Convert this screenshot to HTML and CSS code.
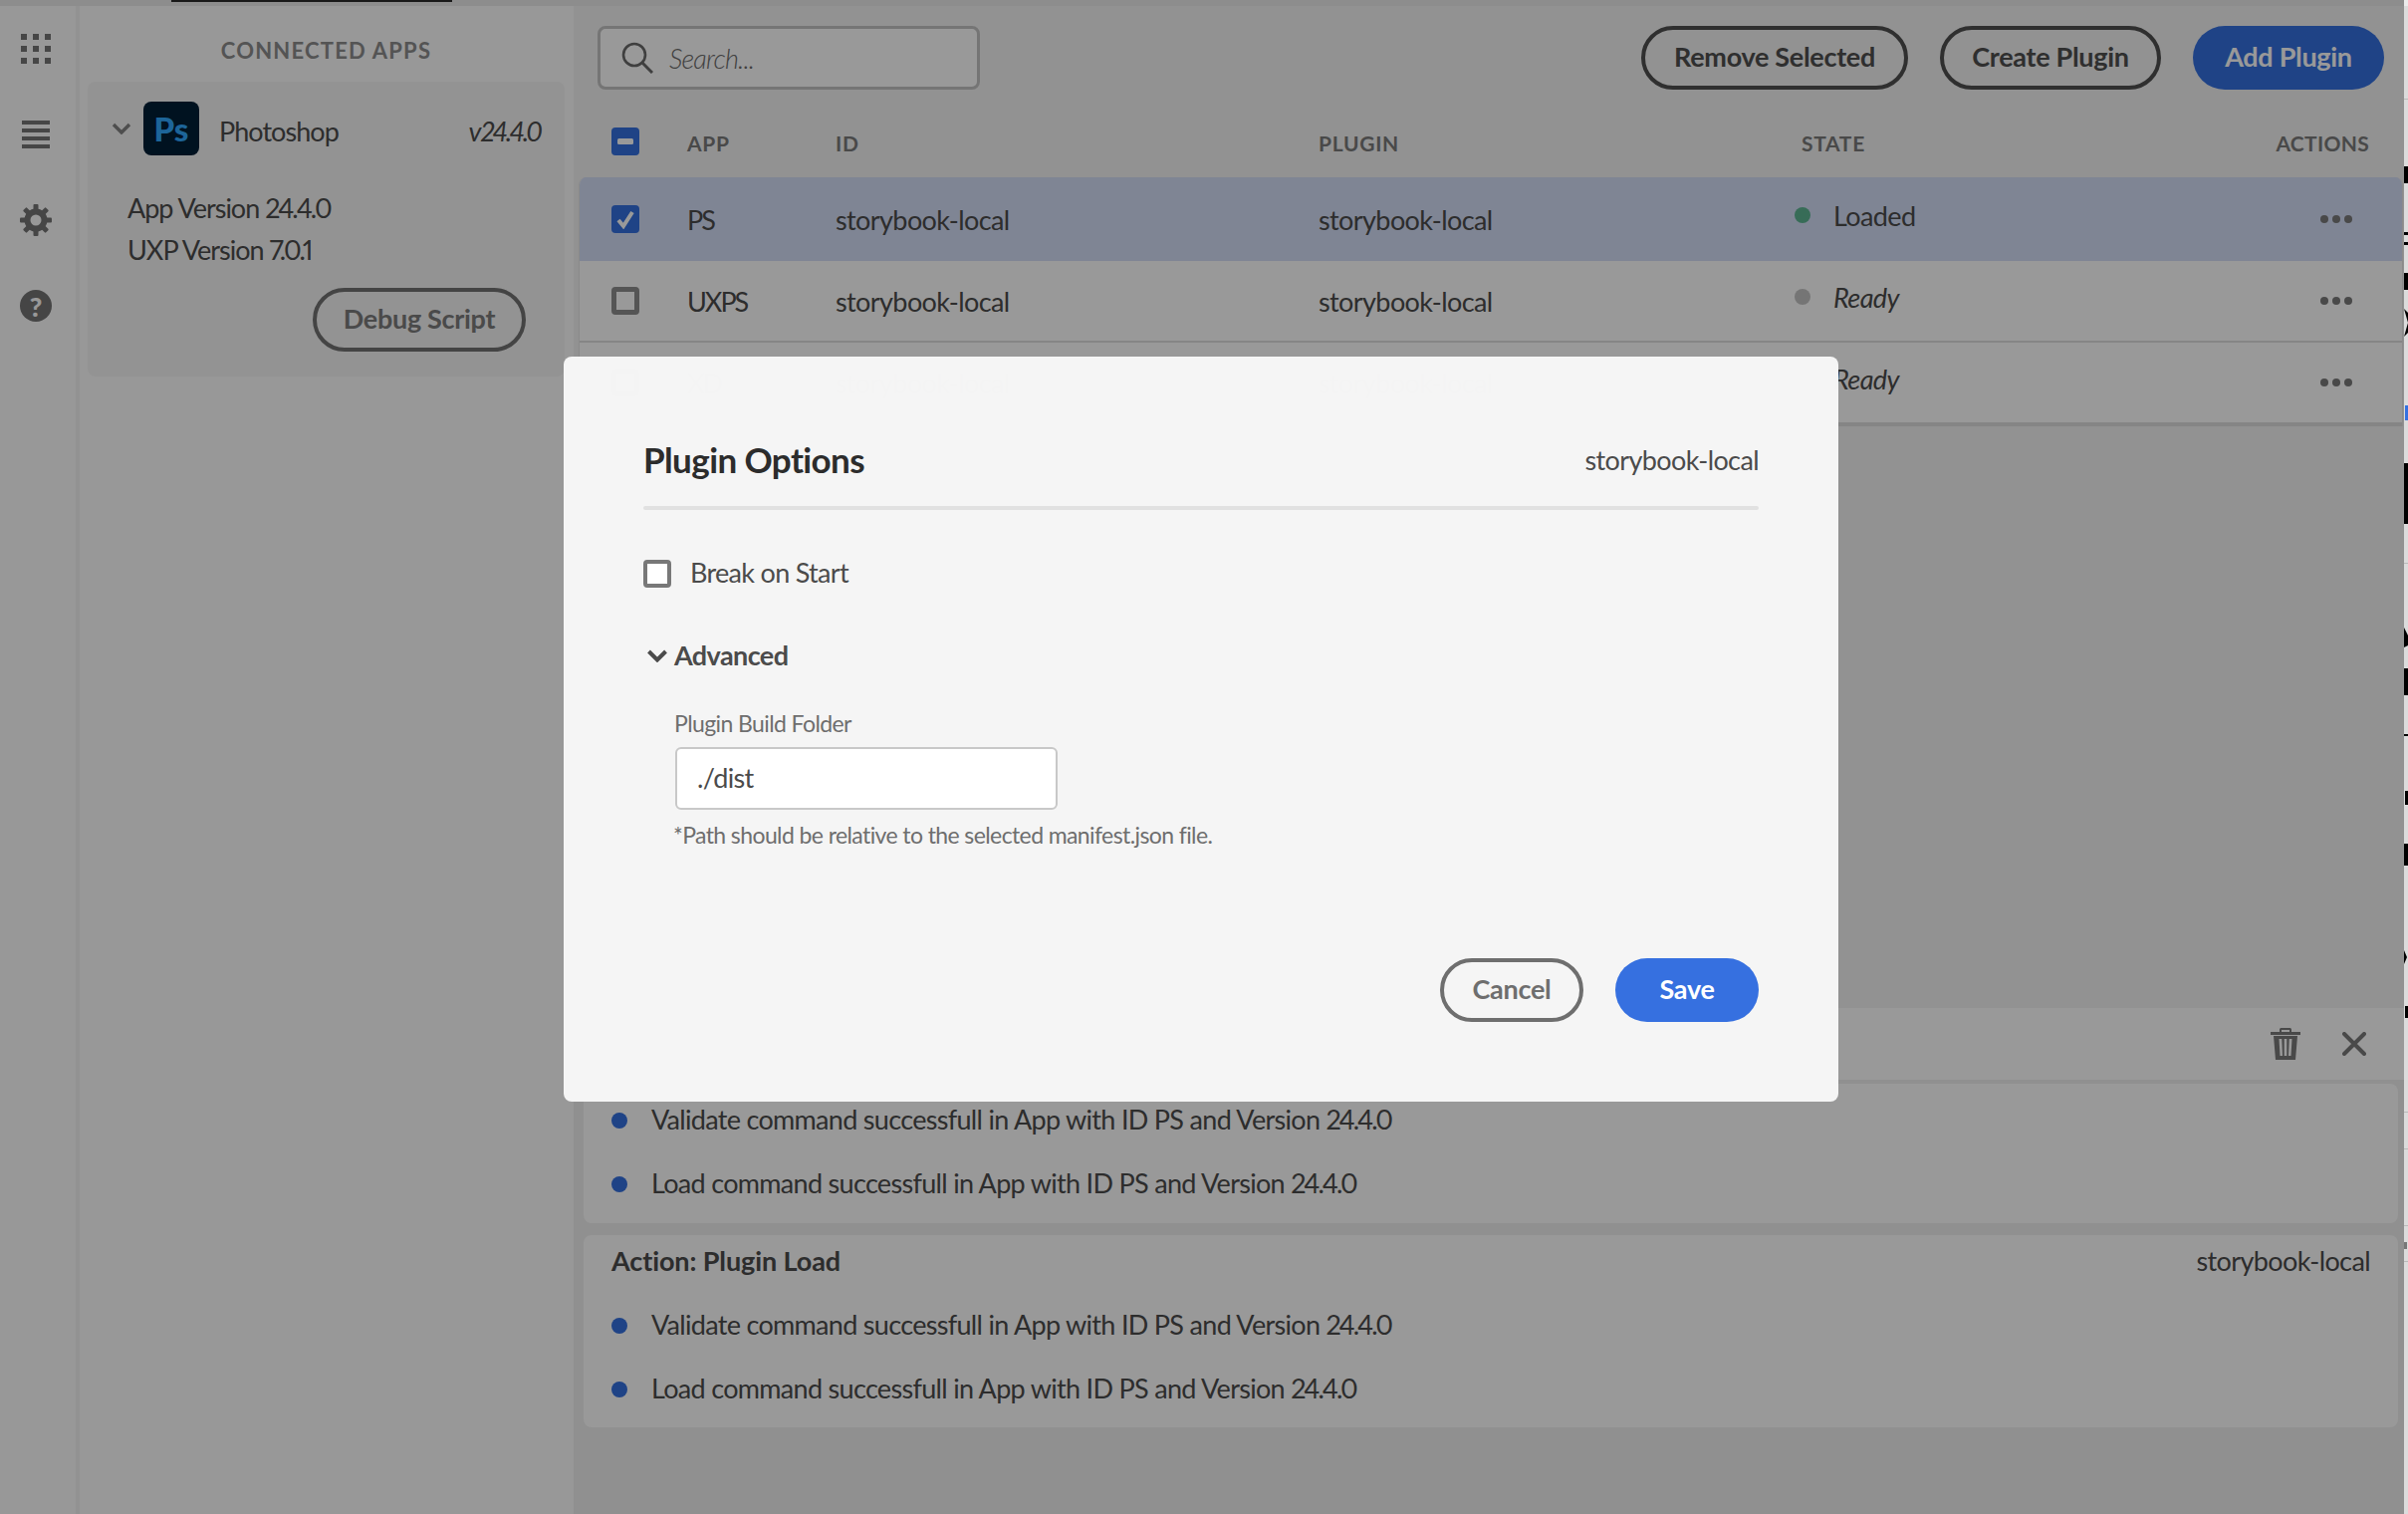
FILE: index.html
```html
<!DOCTYPE html>
<html lang="en">
<head>
<meta charset="utf-8">
<title>Plugin Options</title>
<link rel="stylesheet" href="styles.css">
</head>
<body>
<div class="app">
  <div class="topstrip"><div class="notch"></div></div>
  <div class="workspace">
    <nav class="rail">
      <div class="rail-slot">
        <svg class="ico" width="32" height="32" viewBox="0 0 32 32"><g fill="currentColor"><rect x="1" y="1" width="6" height="6"/><rect x="13" y="1" width="6" height="6"/><rect x="25" y="1" width="6" height="6"/><rect x="1" y="13" width="6" height="6"/><rect x="13" y="13" width="6" height="6"/><rect x="25" y="13" width="6" height="6"/><rect x="1" y="25" width="6" height="6"/><rect x="13" y="25" width="6" height="6"/><rect x="25" y="25" width="6" height="6"/></g></svg>
      </div>
      <div class="rail-slot">
        <svg class="ico" width="32" height="32" viewBox="0 0 32 32"><g fill="currentColor"><rect x="2" y="2" width="28" height="4"/><rect x="2" y="10" width="28" height="4"/><rect x="2" y="18" width="28" height="4"/><rect x="2" y="26" width="28" height="4"/></g></svg>
      </div>
      <div class="rail-slot">
        <svg class="ico" width="32" height="32" viewBox="0 0 32 32"><g fill="currentColor"><circle cx="16" cy="16" r="8.500" fill="none" stroke="currentColor" stroke-width="6"/><rect x="13.500" y="0" width="5" height="6" rx="1"/><rect x="13.500" y="26" width="5" height="6" rx="1"/><rect x="0" y="13.500" width="6" height="5" rx="1"/><rect x="26" y="13.500" width="6" height="5" rx="1"/><rect x="13.500" y="0" width="5" height="6" rx="1" transform="rotate(45 16 16)"/><rect x="13.500" y="26" width="5" height="6" rx="1" transform="rotate(45 16 16)"/><rect x="0" y="13.500" width="6" height="5" rx="1" transform="rotate(45 16 16)"/><rect x="26" y="13.500" width="6" height="5" rx="1" transform="rotate(45 16 16)"/></g></svg>
      </div>
      <div class="rail-slot"><span class="help">?</span></div>
    </nav>

    <aside class="side">
      <h2 class="side-title">CONNECTED APPS</h2>
      <section class="app-card">
        <div class="app-head">
          <svg class="chev" width="20" height="12" viewBox="0 0 20 12"><path d="M2 2l8 8 8-8" fill="none" stroke="currentColor" stroke-width="3.400"/></svg>
          <div class="ps-logo">Ps</div>
          <span class="app-name">Photoshop</span>
          <span class="app-ver">v<span class="num">24.4.0</span></span>
        </div>
        <p class="app-line">App Version <span class="num">24.4.0</span></p>
        <p class="app-line">UXP Version <span class="num">7.0.1</span></p>
        <div class="app-foot"><button class="btn btn-side">Debug Script</button></div>
      </section>
    </aside>

    <main class="main">
      <div class="toolbar">
        <div class="search">
          <svg width="32" height="32" viewBox="0 0 32 32"><circle cx="13" cy="13" r="11" fill="none" stroke="currentColor" stroke-width="2.600"/><path d="M21 21l10 10" stroke="currentColor" stroke-width="3" fill="none"/></svg>
          <span class="search-text">Search...</span>
        </div>
        <div class="actions">
          <button class="btn btn-outline">Remove Selected</button>
          <button class="btn btn-outline">Create Plugin</button>
          <button class="btn btn-primary">Add Plugin</button>
        </div>
      </div>

      <div class="thead grid">
        <span class="cb cb-on"><svg width="16" height="6" viewBox="0 0 16 6"><rect width="16" height="6" rx="1.500" fill="currentColor"/></svg></span>
        <span class="th">APP</span>
        <span class="th">ID</span>
        <span class="th">PLUGIN</span>
        <span class="th th-state">STATE</span>
        <span class="th th-actions">ACTIONS</span>
      </div>
      <div class="table">
        <div class="row row-sel grid">
          <span class="cb cb-on"><svg width="18" height="20" viewBox="0 0 18 20"><path d="M2 11l5 6L16 3" fill="none" stroke="currentColor" stroke-width="4"/></svg></span>
          <span class="cell-app">PS</span><span class="cell">storybook-local</span><span class="cell">storybook-local</span>
          <span class="state"><i class="dot dot-green"></i>Loaded</span>
          <span class="more"><i></i><i></i><i></i></span>
        </div>
        <div class="row grid">
          <span class="cb"></span>
          <span class="cell-app">UXPS</span><span class="cell">storybook-local</span><span class="cell">storybook-local</span>
          <span class="state state-idle"><i class="dot dot-gray"></i>Ready</span>
          <span class="more"><i></i><i></i><i></i></span>
        </div>
        <div class="row row-last grid">
          <span class="cb"></span>
          <span class="cell-app">XD</span><span class="cell">storybook-local</span><span class="cell">storybook-local</span>
          <span class="state state-idle"><i class="dot dot-gray"></i>Ready</span>
          <span class="more"><i></i><i></i><i></i></span>
        </div>
      </div>

      <div class="grow"></div>

      <div class="logs-head">
        <svg width="30" height="32" viewBox="0 0 30 32"><g fill="currentColor"><rect x="0" y="4" width="30" height="3"/><path d="M9 5V1.500A1.500 1.500 0 0 1 10.500 0h9A1.500 1.500 0 0 1 21 1.500V5h-2V2h-8v3z"/><path d="M3 8h24l-2 24H5zM8.500 11l1 17h2.500l-.7-17zM13.700 11v17h2.600V11zM18.700 11l-.7 17h2.500l1-17z" fill-rule="evenodd"/></g></svg>
        <svg width="24" height="24" viewBox="0 0 24 24"><path d="M2 2l20 20M22 2L2 22" stroke="currentColor" stroke-width="4" stroke-linecap="round" fill="none"/></svg>
      </div>
      <div class="logs">
        <section class="log-card">
          <div class="log-row"><i class="bullet"></i><span class="log-text">Validate command successfull in App with ID PS and Version <span class="num">24.4.0</span></span></div>
          <div class="log-row"><i class="bullet"></i><span class="log-text">Load command successfull in App with ID PS and Version <span class="num">24.4.0</span></span></div>
        </section>
        <section class="log-card">
          <header class="log-title"><strong>Action: Plugin Load</strong><span>storybook-local</span></header>
          <div class="log-row"><i class="bullet"></i><span class="log-text">Validate command successfull in App with ID PS and Version <span class="num">24.4.0</span></span></div>
          <div class="log-row"><i class="bullet"></i><span class="log-text">Load command successfull in App with ID PS and Version <span class="num">24.4.0</span></span></div>
        </section>
      </div>
    </main>

    <div class="edge">
      <svg width="4" height="1514" viewBox="0 0 4 1514">
        <g fill="#000">
          <rect y="161" width="4" height="17"/><rect y="227" width="4" height="3"/><rect y="237" width="4" height="3"/><rect y="268" width="4" height="17"/><path d="M0 304l4 14-4 14 4 -4V308z"/><rect y="459" width="4" height="61"/><path d="M0 624l4 8v10l-4 2zM0 665h4v27H0zM0 731h4v2H0zM1 788h3v14H1zM0 841h4v22H0zM0 948l3 7-3 7zM1 1004h3v12H1z"/>
        </g>
        <rect x="1" y="401" width="3" height="15" fill="#3470e0"/>
        <g fill="#bbb"><rect y="93" width="4" height="1"/><rect y="559" width="4" height="1"/><rect y="1110" width="4" height="1"/><rect y="1147" width="4" height="1"/><rect y="1224" width="4" height="1"/><rect y="1260" width="4" height="1"/></g>
        <rect y="1241" width="3" height="7" fill="#777"/>
      </svg>
    </div>
  </div>

  <div class="backdrop">
    <div class="dialog">
      <header class="dlg-head">
        <h1 class="dlg-title">Plugin Options</h1>
        <span class="dlg-id">storybook-local</span>
      </header>
      <div class="dlg-rule"></div>
      <label class="break-row"><span class="cb cb-light"></span><span class="break-text">Break on Start</span></label>
      <div class="adv-row">
        <svg width="20" height="13" viewBox="0 0 20 13"><path d="M1.500 2L10 10.500 18.500 2" fill="none" stroke="currentColor" stroke-width="4"/></svg>
        <span class="adv-text">Advanced</span>
      </div>
      <div class="adv-body">
        <div class="field-label">Plugin Build Folder</div>
        <div class="field">./dist</div>
        <div class="field-hint">*Path should be relative to the selected manifest.json file.</div>
      </div>
      <footer class="dlg-foot">
        <button class="btn btn-cancel">Cancel</button>
        <button class="btn btn-save">Save</button>
      </footer>
    </div>
  </div>
</div>
</body>
</html>
```

FILE: styles.css
```css
* { box-sizing: border-box; }
html, body { margin: 0; padding: 0; }
body {
  width: 2418px;
  height: 1520px;
  overflow: hidden;
  font-family: "Lato", "Liberation Sans", sans-serif;
  font-size: 27px;
  letter-spacing: -0.6px;
  color: #4b4b4b;
  background: #fff;
}
.num { font-variant-numeric: proportional-nums; letter-spacing: -2px; }
.app { position: relative; width: 2418px; height: 1520px; display: flex; flex-direction: column; }
.topstrip { height: 6px; background: #ececec; flex: none; padding-left: 172px; }
.notch { width: 282px; height: 2px; background: #2a2a2a; }
.workspace { flex: 1; display: flex; min-height: 0; }

.rail {
  width: 80px; flex: none; background: #fdfdfd;
  border-right: 4px solid #f3f3f3;
  display: flex; flex-direction: column; padding-right: 4px;
  color: #767676;
}
.rail-slot { height: 86px; display: flex; align-items: center; justify-content: center; }
.help {
  width: 32px; height: 32px; border-radius: 50%; background: #747474; color: #fdfdfd;
  display: flex; align-items: center; justify-content: center;
  font-weight: 900; font-size: 27px; letter-spacing: 0;
}

.side { width: 496px; flex: none; background: #fdfdfd; padding: 0 9px 0 8px; }
.side-title {
  margin: 0; height: 76px; display: flex; align-items: center; justify-content: center;
  font-size: 22px; font-weight: 700; letter-spacing: 1.2px; color: #8c8c8c; padding-top: 12px;
}
.app-card { height: 296px; background: #f5f5f5; border-radius: 8px; }
.app-head { height: 74px; padding: 20px 24px 0 24px; display: flex; align-items: center; }
.chev { color: #828282; margin-right: 12px; flex: none; }
.ps-logo {
  width: 56px; height: 54px; border-radius: 8px; background: #001e36; color: #31a8ff;
  font-weight: 900; font-size: 33px; letter-spacing: 0; flex: none;
  display: flex; align-items: center; justify-content: center;
}
.app-name { margin: 4px 0 0 20px; letter-spacing: -0.95px; }
.app-ver { margin: 4px 0 0 auto; font-style: italic; }
.app-line { margin: 0; padding-left: 40px; height: 42px; line-height: 42px; letter-spacing: -1px; }
.app-line:first-of-type { margin-top: 32px; }
.app-foot { display: flex; justify-content: flex-end; padding: 17px 39px 0 0; }

.btn {
  height: 64px; border-radius: 32px; font: inherit; font-weight: 700; letter-spacing: -0.3px;
  background: none; padding: 0 0 3px; display: inline-flex; align-items: center; justify-content: center;
}
.btn-side { width: 214px; border: 4px solid #727272; color: #7c7c7c; }
.btn-outline { border: 4px solid #4f4f4f; color: #4f4f4f; }
.btn-outline:nth-child(1) { width: 268px; }
.btn-outline:nth-child(2) { width: 222px; }
.btn-primary { width: 192px; border: none; background: #3470e0; color: #fff; }

.main { flex: 1; min-width: 0; background: #f3f3f3; display: flex; flex-direction: column; }
.toolbar { display: flex; justify-content: space-between; padding: 20px 20px 0 24px; flex: none; height: 84px; }
.search {
  width: 384px; height: 64px; border: 3px solid #c4c4c4; border-radius: 8px; background: #fff;
  display: flex; align-items: center; padding-left: 21px; color: #6a6a6a;
}
.search-text { margin-left: 16px; font-style: italic; font-weight: 300; color: #6c6c6c; letter-spacing: -0.8px; }
.actions { display: flex; gap: 32px; }

.grid {
  display: grid;
  grid-template-columns: 76px 149px 485px 478px 300px 1fr;
  align-items: center;
  padding-left: 33px;
}
.thead { height: 88px; margin: 0 1px 0 5px; padding-top: 16px; padding-right: 34px; }
.th { font-size: 21px; font-weight: 700; letter-spacing: 0.7px; color: #7a7a7a; padding-top: 3px; }
.th-state { padding-left: 7px; }
.th-actions { text-align: right; letter-spacing: 0.3px; }

.cb {
  width: 28px; height: 28px; border: 5px solid #8e8e8e; border-radius: 4px; background: #fff;
  display: flex; align-items: center; justify-content: center; flex: none;
}
.cb-on { background: #3470e0; border: none; color: #fff; }
.cb-light { border: 4px solid #787878; }

.table {
  margin: 0 1px 0 5px; border: solid #e6e6e6; border-width: 0 1px; border-radius: 8px 8px 0 0;
  overflow: hidden; background: #fff; flex: none;
}
.row { height: 82px; border-bottom: 2px solid #dedede; padding-left: 32px; padding-right: 34px; }
.row-sel { height: 84px; background: #d4def7; border: solid #d4def7; border-width: 2px 0; }
.row-last { height: 84px; border-bottom: 4px solid #dedede; }
.cell-app { letter-spacing: -2px; }
.state { display: flex; align-items: center; margin-bottom: 8px; }
.state-idle { font-style: italic; }
.dot { width: 16px; height: 16px; border-radius: 50%; margin-right: 23px; flex: none; }
.dot-green { background: #5cb592; }
.dot-gray { background: #c4c4c4; }
.more { display: flex; justify-content: flex-end; gap: 4px; padding-right: 16px; }
.more i { width: 8px; height: 8px; border-radius: 50%; background: #7a7a7a; }

.grow { flex: 1; }
.logs-head {
  height: 72px; flex: none; background: #ffffff;
  display: flex; align-items: center; justify-content: flex-end; gap: 42px; padding-right: 38px;
  color: #7a7a7a;
}
.logs { height: 436px; flex: none; padding: 4px 6px 0 10px; display: flex; flex-direction: column; gap: 12px; background: #f0f0f0; }
.log-card { background: #fff; border-radius: 8px; padding: 5px 28px 6px; }
.log-card:first-child { height: 140px; }
.log-title { height: 50px; margin: -5px 0 7px; padding-bottom: 2px; display: flex; justify-content: space-between; align-items: center; box-sizing: content-box; }
.log-title strong { font-weight: 700; letter-spacing: -0.1px; }
.log-row { height: 64px; display: flex; align-items: center; }
.log-text { margin-bottom: 3px; letter-spacing: -0.69px; }
.bullet { width: 16px; height: 16px; border-radius: 50%; background: #3470e0; margin-right: 24px; flex: none; }

.edge { width: 4px; flex: none; background: #dcdcdc; position: relative; z-index: 5; }
.edge svg { display: block; }

.backdrop { position: absolute; left: 0; top: 0; width: 2414px; height: 1520px; background: rgba(0,0,0,.4); }
.dialog {
  position: absolute; left: 566px; top: 358px; width: 1280px; height: 748px;
  background: rgba(246,246,246,.994); border-radius: 8px; padding: 0 80px;
  display: flex; flex-direction: column;
}
.dlg-head { height: 150px; padding: 56px 0 0; display: flex; justify-content: space-between; align-items: center; flex: none; }
.dlg-title { margin: 0; font-size: 35px; font-weight: 700; color: #2c2c2c; }
.dlg-rule { height: 4px; border-radius: 2px; background: #e1e1e1; flex: none; }
.break-row { margin-top: 50px; height: 28px; display: flex; align-items: center; gap: 20px; flex: none; }
.break-text { margin-bottom: 3px; margin-left: -1px; letter-spacing: -0.7px; }
.adv-row { margin-top: 50px; height: 36px; display: flex; align-items: center; gap: 7px; padding-left: 4px; font-weight: 700; flex: none; }
.adv-text { margin-bottom: 1px; }
.adv-body { padding-left: 31px; }
.field-label { margin-top: 35px; height: 30px; line-height: 30px; font-size: 23px; color: #6e6e6e; }
.field { margin: 9px 0 0 1px; width: 384px; height: 63px; border: 2px solid #c8c8c8; border-radius: 6px; background: #fff; display: flex; align-items: center; padding: 0 0 2px 20px; }
.field-hint { margin-top: 10px; height: 30px; line-height: 30px; font-size: 23px; color: #6e6e6e; margin-left: -1px; }
.dlg-foot { margin-top: auto; padding-bottom: 80px; display: flex; justify-content: flex-end; gap: 32px; }
.btn-cancel { width: 144px; border: 4px solid #6e6e6e; color: #6e6e6e; }
.btn-save { width: 144px; border: none; background: #3670e0; color: #fff; }
```
